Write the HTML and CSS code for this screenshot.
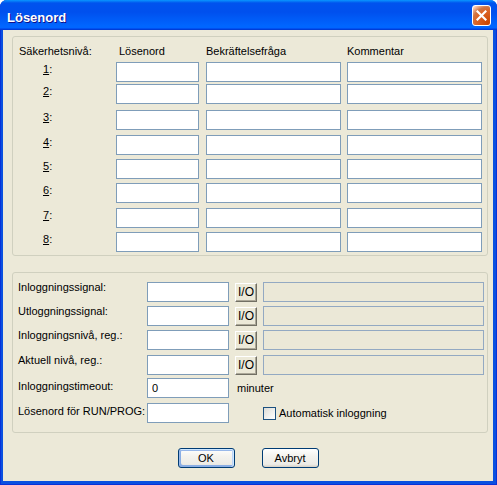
FILE: index.html
```html
<!DOCTYPE html>
<html lang="sv">
<head>
<meta charset="utf-8">
<title>Lösenord</title>
<link rel="stylesheet" href="styles.css">
</head>
<body>
<div class="window">
  <div class="titlebar">
    <span class="title">Lösenord</span>
    <button class="close" aria-label="Stäng"><svg width="11" height="11" viewBox="0 0 11 11"><path d="M1.5 1.5 L9.5 9.5 M9.5 1.5 L1.5 9.5" stroke="#fff" stroke-width="2.2" stroke-linecap="square"/></svg></button>
  </div>
  <div class="client">
    <div class="group levels">
      <div class="hdr">Säkerhetsnivå:</div>
      <div class="hdr hdr-pw">Lösenord</div>
      <div class="hdr">Bekräftelsefråga</div>
      <div class="hdr">Kommentar</div>

      <div class="lvl"><u>1</u>:</div><input class="tb w83"><input class="tb w135"><input class="tb w135">
      <div class="lvl"><u>2</u>:</div><input class="tb w83"><input class="tb w135"><input class="tb w135">
      <div class="lvl"><u>3</u>:</div><input class="tb w83"><input class="tb w135"><input class="tb w135">
      <div class="lvl"><u>4</u>:</div><input class="tb w83"><input class="tb w135"><input class="tb w135">
      <div class="lvl"><u>5</u>:</div><input class="tb w83"><input class="tb w135"><input class="tb w135">
      <div class="lvl"><u>6</u>:</div><input class="tb w83"><input class="tb w135"><input class="tb w135">
      <div class="lvl"><u>7</u>:</div><input class="tb w83"><input class="tb w135"><input class="tb w135">
      <div class="lvl"><u>8</u>:</div><input class="tb w83"><input class="tb w135"><input class="tb w135">
    </div>

    <div class="group signals">
      <div class="lbl">Inloggningssignal:</div><input class="tb w82"><button class="io">I/O</button><div class="wide"></div>
      <div class="lbl">Utloggningssignal:</div><input class="tb w82"><button class="io">I/O</button><div class="wide"></div>
      <div class="lbl">Inloggningsnivå, reg.:</div><input class="tb w82"><button class="io">I/O</button><div class="wide"></div>
      <div class="lbl">Aktuell nivå, reg.:</div><input class="tb w82"><button class="io">I/O</button><div class="wide"></div>
      <div class="lbl mid">Inloggningstimeout:</div><input class="tb w82 val" value="0"><div class="unit">minuter</div>
      <div class="lbl mid">Lösenord för RUN/PROG:</div><input class="tb w82"><label class="chk"><span class="box"></span><span>Automatisk inloggning</span></label>
    </div>

    <div class="buttons">
      <button class="btn default">OK</button>
      <button class="btn">Avbryt</button>
    </div>
  </div>
</div>
</body>
</html>
```
FILE: styles.css
```css
* { box-sizing: border-box; }
html, body { margin: 0; padding: 0; background: #fff; }
body { font-family: "Liberation Sans", Arial, sans-serif; font-size: 11px; color: #000; }

.window {
  width: 497px; height: 485px;
  background: #0A50E0;
  box-shadow: inset 1px 0 #0831D9, inset -1px -1px #0831D9;
  border-radius: 7px 7px 0 0;
  display: flex; flex-direction: column;
  overflow: hidden;
}
.titlebar {
  height: 30px; flex: none;
  display: flex; align-items: flex-start;
  padding-left: 7px;
  background: linear-gradient(180deg, #0997ff 0%, #0053ee 10%, #0050ee 40%, #0066ff 86%, #0066ff 92%, #005bff 94%, #003dd7 97%, #003dd7 100%);
}
.title {
  margin-top: 10px;
  font-weight: bold; font-size: 13px; line-height: 15px;
  color: #fff; text-shadow: 1px 1px #0F1089;
}
.close {
  margin: 5px 6px 0 auto;
  width: 19px; height: 21px; padding: 0;
  border: 1px solid #fff; border-radius: 3px;
  background: radial-gradient(circle at 90% 90%, #cc4600 0%, #dc6527 55%, #cd7546 70%, #ffccb2 92%, #fff 100%);
  display: flex; align-items: center; justify-content: center;
}

.client {
  flex: 1;
  margin: 0 4px 4px 3px;
  background: #ECE9D8;
  padding: 6px 5px 0 9px;
  display: flex; flex-direction: column;
}
.group {
  border: 1px solid #D0D0BF;
  border-radius: 3px;
  display: grid;
  align-items: start;
}
.levels {
  padding: 8px 0 3px 6px;
  grid-template-columns: 97px 90px 141px 135px;
  grid-template-rows: 17px 22px 26px 25px 24px 24px 25px 24px 20px;
}
.hdr { line-height: 13px; white-space: nowrap; }
.hdr-pw { padding-left: 3px; }
.lvl { padding-left: 24px; margin-top: 1px; line-height: 13px; }

.tb {
  display: block; margin: 0;
  height: 20px;
  border: 1px solid #7F9DB9; border-radius: 0;
  background: #fff;
  padding: 0 3px;
  font: inherit; color: #000;
  outline: none;
}
.w83 { width: 83px; }
.w135 { width: 135px; }
.w82 { width: 82px; }
.val { padding-left: 4px; }

.signals {
  margin-top: 16px;
  padding: 9px 0 9px 5px;
  grid-template-columns: 129px 88px 28px 221px;
  grid-template-rows: 24px 24px 25px 23px 25px 20px;
}
.lbl { line-height: 13px; margin-top: -1px; white-space: nowrap; }
.lbl.mid { margin-top: 2px; }
.io {
  margin: 1px 0 0 0; padding: 0;
  width: 22px; height: 19px;
  background: #ECE9D8;
  border: 1px solid; border-color: #fff #716F64 #716F64 #fff;
  box-shadow: inset -1px -1px #ACA899;
  font: inherit; font-size: 12px; line-height: 15px; color: #000;
}
.wide {
  width: 221px; height: 20px;
  border: 1px solid #93A9C2;
  background: #EBE8D7;
}
.unit {
  grid-column: 3 / span 2;
  padding-left: 2px; margin-top: 4px;
  line-height: 13px;
}
.chk {
  grid-column: 4;
  height: 20px;
  display: flex; align-items: center; gap: 3px;
  line-height: 13px;
}
.box {
  width: 13px; height: 13px;
  border: 1px solid #1C5180;
  background: linear-gradient(135deg, #DCDCD7 0%, #F2F2EF 60%, #fff 100%);
}

.buttons {
  margin: 15px -5px 0 -9px;
  display: flex; justify-content: center; gap: 27px;
}
.btn {
  width: 57px; height: 20px; padding: 0;
  border: 1px solid #003C74; border-radius: 3px;
  background: linear-gradient(180deg, #fff 0%, #F4F3EE 40%, #ECEBE6 85%, #D6D0C5 100%);
  font: inherit; color: #000;
}
.btn.default {
  box-shadow: inset -1px 1px #cee7ff, inset 1px 2px #98b8ea, inset -2px 0 #bcd4f6, inset 1px -1px #89ade4, inset 2px -2px #89ade4;
}
```
